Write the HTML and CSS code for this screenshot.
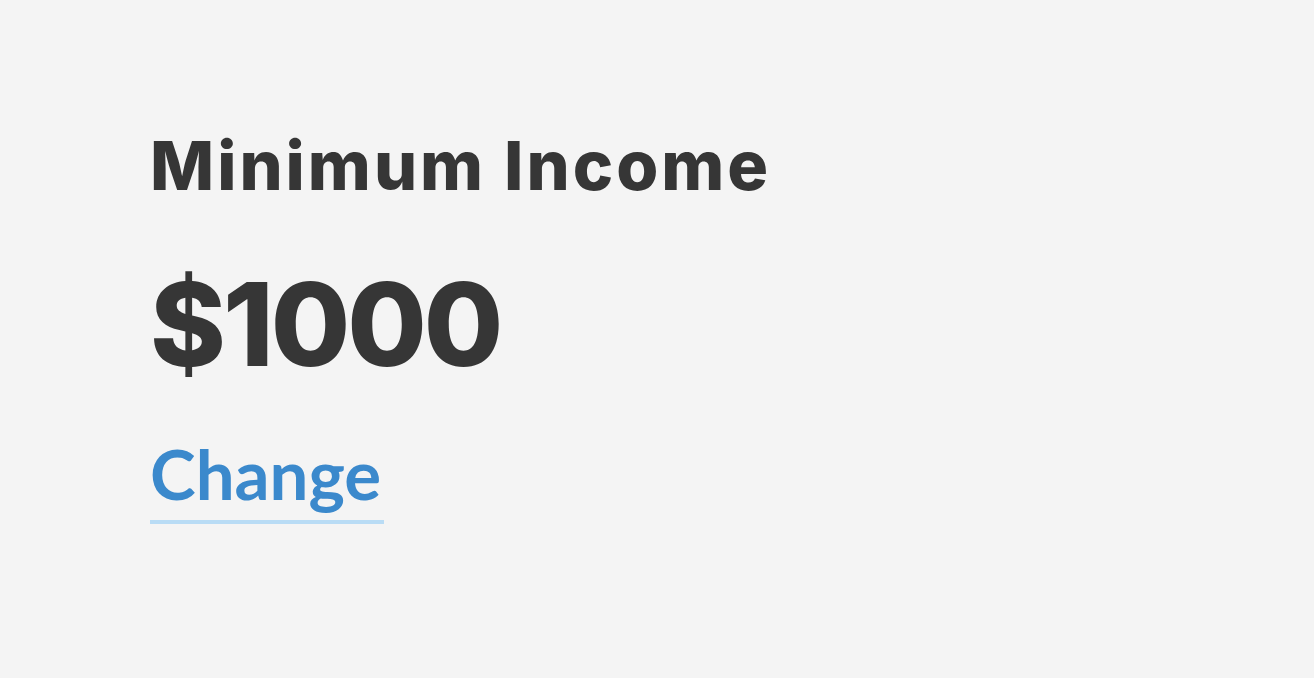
FILE: index.html
```html
<!DOCTYPE html>
<html lang="en">
<head>
<meta charset="utf-8">
<title>Minimum Income</title>
<link rel="stylesheet" href="styles.css">
</head>
<body>
<main class="income">
  <h2 class="income-label">Minimum Income</h2>
  <p class="income-value">$1000</p>
  <a class="income-change" href="#">Change</a>
</main>
</body>
</html>
```
FILE: styles.css
```css
html, body {
  margin: 0;
  padding: 0;
  background: #f4f4f4;
}

.income {
  display: flex;
  flex-direction: column;
  align-items: flex-start;
  padding: 120px 0 0 150px;
}

.income-label {
  margin: 0;
  font-family: Inter, "Noto Sans", sans-serif;
  font-weight: 800;
  font-size: 68px;
  line-height: 90px;
  color: #363636;
  letter-spacing: 3px;
}

.income-value {
  margin: 40px 0 0;
  font-family: Inter, "Noto Sans", sans-serif;
  font-weight: 800;
  font-size: 115px;
  line-height: 150px;
  color: #363636;
  letter-spacing: -3px;
}

.income-change {
  margin-top: 34px;
  padding: 0 3px 6px 0;
  font-family: Lato, "Noto Sans", sans-serif;
  font-weight: 700;
  font-size: 69px;
  line-height: 80px;
  color: #3b89cc;
  text-decoration: none;
  border-bottom: 4px solid #b9dcf5;
}
```
